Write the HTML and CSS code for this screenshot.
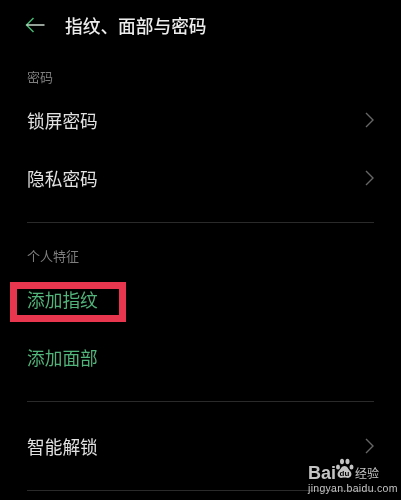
FILE: index.html
```html
<!DOCTYPE html>
<html lang="zh-CN">
<head>
    <meta charset="UTF-8">
    <meta name="viewport" content="width=device-width, initial-scale=1.0">
    <title>指纹、面部与密码</title>
    <link rel="stylesheet" href="styles.css">
</head>
<body>
    <div class="screen">
        <!-- 标题栏 -->
        <div class="header">
            <svg class="back" width="20" height="16" viewBox="0 0 20 16">
                <path d="M8.5 1 L1.5 8 L8.5 15" fill="none" stroke="#45b872" stroke-width="1.5"/>
                <path d="M1.5 8 H19.5" fill="none" stroke="#d5e6da" stroke-width="1.4"/>
            </svg>
            <span class="title">指纹、面部与密码</span>
        </div>

        <!-- 密码 -->
        <div class="section first">
            <div class="label">密码</div>
            <div class="row">
                <span>锁屏密码</span>
                <svg class="chevron" width="9" height="16" viewBox="0 0 9 16"><path d="M1 1 L8 8 L1 15" fill="none" stroke="#666" stroke-width="1.4"/></svg>
            </div>
            <div class="row">
                <span>隐私密码</span>
                <svg class="chevron" width="9" height="16" viewBox="0 0 9 16"><path d="M1 1 L8 8 L1 15" fill="none" stroke="#666" stroke-width="1.4"/></svg>
            </div>
        </div>

        <!-- 个人特征 -->
        <div class="section middle">
            <div class="label">个人特征</div>
            <div class="row green">添加指纹</div>
            <div class="row green">添加面部</div>
        </div>

        <!-- 智能解锁 -->
        <div class="section last">
            <div class="row">
                <span>智能解锁</span>
                <svg class="chevron" width="9" height="16" viewBox="0 0 9 16"><path d="M1 1 L8 8 L1 15" fill="none" stroke="#666" stroke-width="1.4"/></svg>
            </div>
        </div>

        <div class="highlight"></div>

        <!-- 水印 -->
        <div class="watermark">
            <div class="wm-top">
                <span class="wm-bai">Bai</span>
                <svg class="wm-paw" width="19" height="21" viewBox="0 0 19 21">
                    <ellipse cx="3" cy="9" rx="2" ry="2.6" fill="#c4c4c4"/>
                    <ellipse cx="7" cy="3.5" rx="2" ry="2.8" fill="#c4c4c4"/>
                    <ellipse cx="12.5" cy="3.5" rx="2" ry="2.8" fill="#c4c4c4"/>
                    <ellipse cx="16.5" cy="9" rx="2" ry="2.6" fill="#c4c4c4"/>
                    <path d="M9.5 8 C6.5 8 6 11 3.5 13.5 C1 17 4 20.5 7 19.8 C8.5 19.4 10.5 19.4 12 19.8 C15 20.5 18 17 15.5 13.5 C13 11 12.5 8 9.5 8 Z" fill="#c4c4c4"/>
                    <text x="9.5" y="17.5" text-anchor="middle" class="wm-du">du</text>
                </svg>
                <span class="wm-jy">经验</span>
            </div>
            <div class="wm-url">jingyan.baidu.com</div>
        </div>
    </div>
</body>
</html>
```

FILE: styles.css
```css
body {
    margin: 0;
    background-color: #000;
    font-family: "Noto Sans CJK SC", "Liberation Sans", sans-serif;
}
.screen {
    position: relative;
    width: 401px;
    height: 500px;
    overflow: hidden;
    background-color: #000;
    color: #e2e2e2;
    filter: blur(0.4px);
}
.header {
    display: flex;
    align-items: center;
    height: 50px;
    padding-left: 25px;
}
.back {
    margin-right: 20px;
}
.title {
    font-size: 17.7px;
    font-weight: 500;
    color: #ececec;
}
.section {
    margin: 0 27px;
    border-bottom: 1px solid #2a2a2a;
}
.section.first {
    padding-top: 17px;
    box-sizing: border-box;
    height: 173px;
}
.section.middle {
    padding-top: 23px;
    padding-bottom: 15px;
}
.section.last {
    padding-top: 15px;
    padding-bottom: 15px;
}
.label {
    font-size: 13px;
    line-height: 20px;
    margin-bottom: 4px;
    color: #7e7e7e;
}
.row {
    display: flex;
    align-items: center;
    justify-content: space-between;
    height: 58px;
    font-size: 17.7px;
}
.green {
    color: #52b37a;
}
.highlight {
    position: absolute;
    left: 10px;
    top: 282px;
    width: 102px;
    height: 26px;
    border: 7px solid #e8364f;
}
.watermark {
    position: absolute;
    left: 308px;
    top: 458px;
    color: #c4c4c4;
}
.wm-top {
    display: flex;
    align-items: flex-end;
    height: 24px;
}
.wm-bai {
    font-family: "Liberation Sans", sans-serif;
    font-size: 18px;
    line-height: 18px;
    font-weight: bold;
}
.wm-paw {
    align-self: flex-start;
    margin-left: -1px;
}
.wm-du {
    font-family: "Liberation Sans", sans-serif;
    font-size: 8px;
    font-weight: bold;
    fill: #000;
}
.wm-jy {
    font-size: 12px;
    line-height: 18px;
    margin-left: 1px;
}
.wm-url {
    font-family: "Liberation Sans", sans-serif;
    font-size: 10.5px;
    line-height: 12px;
    letter-spacing: 0.3px;
    white-space: nowrap;
}
```
